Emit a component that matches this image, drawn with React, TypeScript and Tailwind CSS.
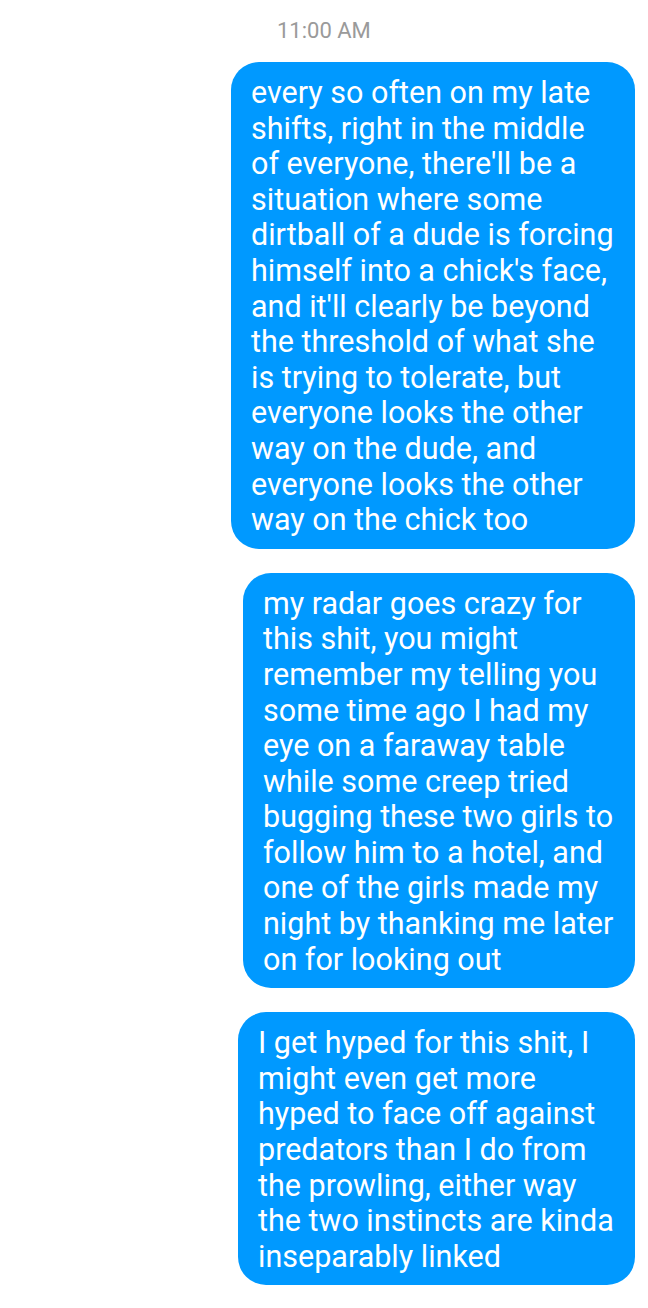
import React from 'react';

const messages: string[][] = [
  [
    'every so often on my late',
    'shifts, right in the middle',
    "of everyone, there'll be a",
    'situation where some',
    'dirtball of a dude is forcing',
    "himself into a chick's face,",
    "and it'll clearly be beyond",
    'the threshold of what she',
    'is trying to tolerate, but',
    'everyone looks the other',
    'way on the dude, and',
    'everyone looks the other',
    'way on the chick too',
  ],
  [
    'my radar goes crazy for',
    'this shit, you might',
    'remember my telling you',
    'some time ago I had my',
    'eye on a faraway table',
    'while some creep tried',
    'bugging these two girls to',
    'follow him to a hotel, and',
    'one of the girls made my',
    'night by thanking me later',
    'on for looking out',
  ],
  [
    'I get hyped for this shit, I',
    'might even get more',
    'hyped to face off against',
    'predators than I do from',
    'the prowling, either way',
    'the two instincts are kinda',
    'inseparably linked',
  ],
];

const widths = ['w-[404px]', 'w-[392px]', 'w-[397px]'];

const App: React.FC = () => {
  return (
    <div className="w-[648px] h-[1308px] bg-white font-['Roboto',sans-serif] overflow-hidden">
      <div className="pt-[19px] pl-[277px] text-[22px] leading-[24px] text-[#9a9a9a]">11:00 AM</div>
      <div className="flex flex-col items-end gap-[24px] pr-[13px] mt-[19px]">
        {messages.map((lines, i) => (
          <div
            key={i}
            className={`${widths[i]} bg-[#0099ff] text-white rounded-[28px] px-[20px] pt-[13px] pb-[11px] text-[30.5px] leading-[35.6px] whitespace-nowrap`}
          >
            {lines.map((l, j) => (
              <div key={j}>{l}</div>
            ))}
          </div>
        ))}
      </div>
    </div>
  );
};

export default App;
